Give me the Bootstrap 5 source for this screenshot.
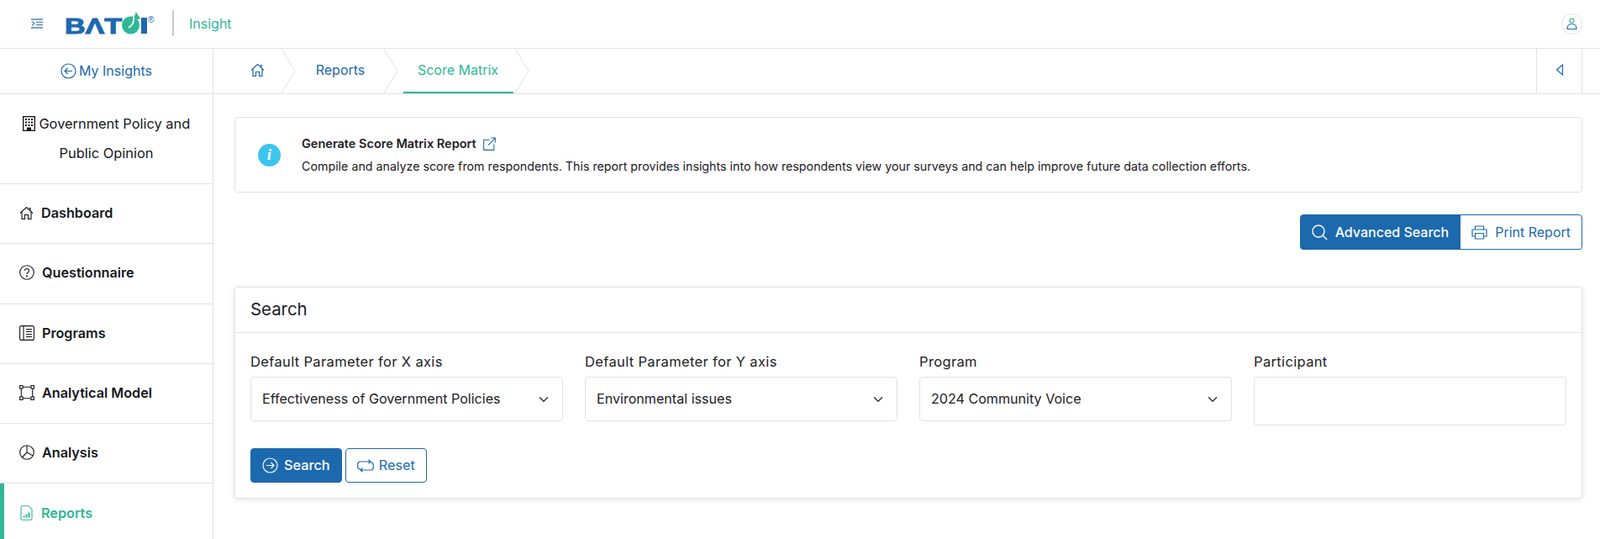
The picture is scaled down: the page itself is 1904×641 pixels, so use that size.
<!DOCTYPE html>
<html lang="en"><head><meta charset="utf-8"><title>Score Matrix</title>
<link href="https://cdn.jsdelivr.net/npm/bootstrap@5.3.0/dist/css/bootstrap.min.css" rel="stylesheet">
<style>
:root{--blue:#1c69ae;--green:#2fb796;--line:#dfe2e6;--ink:#1d2026}
html,body{height:641px;overflow:hidden}
body{font-family:Inter,"Noto Sans",sans-serif;font-size:15px;color:var(--ink);background:#fff}
svg{flex:none}
.top-bar{height:58px;border-bottom:1px solid var(--line);padding:0 21px 2px 37px}
.logo-svg{margin-left:26px}
.app-sep{width:2px;height:31px;background:#c9cbcd;margin:0 18px}
.app-name{color:var(--green);font-size:16px}
.user-ring{width:25px;height:25px;border:1px solid #dfe3e8;border-radius:50%;margin-top:2px}
.second-bar{height:54px;border-bottom:1px solid var(--line)}
.back-cell{width:254px;border-right:1px solid var(--line);color:var(--blue);font-size:16px;gap:3px;padding-bottom:1px}
.crumb{height:53px;color:var(--blue);font-size:16px;text-decoration:none;position:relative;padding-bottom:3px}
.crumb-arrow{position:absolute;right:-16px;top:0;z-index:1}
.crumb-home{width:82px;padding-left:22px}
.crumb-rep{width:122px;padding-left:16px}
.crumb-score{width:156px;padding-left:18px;color:var(--green)}
.crumb-score::after{content:"";position:absolute;left:22px;right:3px;bottom:0;height:2px;background:var(--green)}
.collapse-cell{width:55px;height:53px;border-left:1px solid var(--line);border-right:1px solid var(--line);margin-right:21px;padding-bottom:3px}
.side-col{width:254px;height:529px;border-right:1px solid var(--line)}
.side-title{height:107px;border-bottom:1px solid var(--line);text-align:center;padding:18px 18px 0;line-height:35px;font-size:16.400px;font-weight:400;color:#15171c}
.side-item{height:71.300px;border-bottom:1px solid var(--line);padding:0 0 2px 23px;gap:9px;font-size:16.200px;font-weight:600;color:#15171c}
.side-item.is-on{color:var(--green);border-bottom:0;border-left:5px solid var(--green);padding-left:19px;gap:10px}
.main-col{padding:27px 21px 0 25px;min-width:0}
.info-box{height:90px;border:1px solid var(--line);border-radius:4px;padding:0 0 0 27px;gap:25px}
.info-dot{width:27px;height:27px;border-radius:50%;background:#3cc5ee;color:#fff;font-family:"Liberation Serif",serif;font-style:italic;font-weight:700;font-size:19px}
.info-head{font-weight:600;font-size:14.500px;line-height:20px;gap:8px}
.info-text{font-size:14.250px;line-height:20px;margin-top:7px}
.act-row{margin-top:26px;height:42px}
.act-a,.act-b{height:42px;font-size:16px;padding:0 13px;gap:9px;--bs-btn-border-radius:4px}
.act-a{background:var(--blue);border-color:var(--blue);color:#fff;font-weight:500}
.act-b{background:#fff;border-color:var(--blue);color:var(--blue)}
.search-box{margin-top:44px;height:252px;border:1px solid var(--line);border-radius:3px;box-shadow:0 1px 6px rgba(0,0,0,.12)}
.search-head{height:54px;border-bottom:1px solid var(--line);padding:0 18px;font-size:20.400px;background:#fff}
.search-body{padding:23px 18px 0}
.fld-grid{--bs-gutter-x:26px;margin-left:-13px;margin-right:-13px}
.fld-label{font-size:16.500px;letter-spacing:.35px;line-height:22px;margin-bottom:7px;color:var(--ink)}
.fld-select{height:53px;border:1px solid var(--line);border-radius:4px;font-size:16.100px;color:var(--ink);padding:0 41px 0 13px;background-position:right 14px center;background-size:16px 12px}
.fld-input{height:58px;border:1px solid var(--line);border-radius:3px}
.btn-row{gap:4px;margin-top:27px}
.go-btn,.clear-btn{height:41px;font-size:16.300px;padding:0 13px;gap:7px;--bs-btn-border-radius:4px}
.go-btn{background:var(--blue);border-color:var(--blue);color:#fff;font-weight:500}
.clear-btn{background:#fff;border-color:var(--blue);color:var(--blue);gap:6px}
</style></head>
<body>
<header class="top-bar d-flex align-items-center">
  <svg width="14" height="12" viewBox="0 0 14 12" fill="none" stroke="#4f7fb8" stroke-width="1.300"><path d="M0 1h14M6 4.300h8M6 7.600h8M0 11h14M1 3.500l3 2.500-3 2.500"/></svg>
  <svg class="logo-svg" width="110" height="36" viewBox="0 -5 110 36">
    <text x="0" y="25" font-family="Liberation Sans" font-weight="700" font-size="26" fill="#1c69ae" stroke="#1c69ae" stroke-width="1" textLength="68" lengthAdjust="spacingAndGlyphs">BΛT</text>
    <circle cx="78.500" cy="15" r="10.500" fill="#2fb796"/><path d="M77 6 84 3l.5-4 5.500 8-5 2z" fill="#2fb796"/><path d="M82 4c1 6-1 11-6 14" stroke="#fff" stroke-width="1.800" fill="none"/>
    <rect x="91" y="6" width="7" height="19" fill="#1c69ae"/>
    <text x="99" y="12" font-family="Liberation Sans" font-size="10" fill="#1c69ae">®</text>
  </svg>
  <span class="app-sep"></span><span class="app-name">Insight</span>
  <span class="user-ring ms-auto d-flex align-items-center justify-content-center">
    <svg width="15" height="15" viewBox="0 0 15 15" fill="none" stroke-width="1.100"><circle cx="7.500" cy="3.500" r="2.500" stroke="#2fb796"/><path d="M2 13.500c0-4 2.500-6 5.500-6s5.500 2 5.500 6z" stroke="#1c69ae"/></svg>
  </span>
</header>
<div class="second-bar d-flex">
  <div class="back-cell d-flex align-items-center justify-content-center">
    <svg width="19" height="19" viewBox="0 0 19 19" fill="none" stroke="#1c69ae" stroke-width="1.200"><circle cx="9.500" cy="9.500" r="8.500"/><path d="M14 9.500H5M8.500 6l-3.500 3.500 3.500 3.500"/></svg>
    <span>My Insights</span>
  </div>
  <nav class="d-flex flex-grow-1">
    <a class="crumb crumb-home d-flex align-items-center justify-content-center" href="#">
      <svg width="17" height="17" viewBox="0 0 17 17" fill="none" stroke="#1c69ae" stroke-width="1.200"><path d="M1 8.500 8.500 1.500 16 8.500M3 7v8.500h3.500v-5h4v5H14V7M11.500 2.500H13v3"/></svg>
      <svg class="crumb-arrow" width="17" height="53" viewBox="0 0 17 53" fill="none" stroke="#dfe2e6"><path d="M0 0l16 26.500L0 53"/></svg>
    </a>
    <a class="crumb crumb-rep d-flex align-items-center justify-content-center" href="#">Reports
      <svg class="crumb-arrow" width="17" height="53" viewBox="0 0 17 53" fill="none" stroke="#dfe2e6"><path d="M0 0l16 26.500L0 53"/></svg></a>
    <a class="crumb crumb-score d-flex align-items-center justify-content-center" href="#">Score Matrix
      <svg class="crumb-arrow" width="17" height="53" viewBox="0 0 17 53" fill="none" stroke="#dfe2e6"><path d="M0 0l16 26.500L0 53"/></svg></a>
    <div class="collapse-cell ms-auto d-flex align-items-center justify-content-center">
      <svg width="10" height="14" viewBox="0 0 10 14" fill="none" stroke="#1c69ae" stroke-width="1.200"><path d="M8.500 1 1.500 7l7 6z"/></svg>
    </div>
  </nav>
</div>
<div class="d-flex">
  <aside class="side-col flex-shrink-0">
    <div class="side-title">
      <svg width="15" height="18" viewBox="0 0 15 18" style="vertical-align:-3px"><rect x=".6" y=".6" width="13.800" height="16.800" fill="none" stroke="#15171c" stroke-width="1.500"/><path d="M3 3h2v2H3zM6.500 3h2v2h-2zM10 3h2v2h-2zM3 6.500h2v2H3zM6.500 6.500h2v2h-2zM10 6.500h2v2h-2zM3 10h2v2H3zM6.500 10h2v2h-2zM10 10h2v2h-2zM5 13.500h5V17H5z" fill="#15171c"/></svg>
      Government Policy and Public Opinion
    </div>
    <div class="side-item d-flex align-items-center"><svg width="17" height="17" viewBox="0 0 17 17" fill="none" stroke="#15171c" stroke-width="1.100"><path d="M1 8.500 8.500 1.500 16 8.500M3 7v8.500h3.500v-5h4v5H14V7M11.500 2.500H13v3"/></svg>Dashboard</div>
    <div class="side-item d-flex align-items-center"><svg width="18" height="18" viewBox="0 0 18 18" fill="none" stroke="#15171c" stroke-width="1.100"><circle cx="9" cy="9" r="8.300"/><path d="M6.500 7c0-3.300 5-3.300 5 0 0 2-2.500 2-2.500 4"/><circle cx="9" cy="13.300" r=".5" fill="#15171c"/></svg>Questionnaire</div>
    <div class="side-item d-flex align-items-center"><svg width="18" height="18" viewBox="0 0 18 18" fill="none" stroke="#15171c" stroke-width="1.100"><rect x=".6" y=".6" width="16.800" height="16.800" rx="2"/><path d="M5 1v16M8 4.500h7M8 7.500h7M8 10.500h7M8 13.500h7"/></svg>Programs</div>
    <div class="side-item d-flex align-items-center"><svg width="18" height="18" viewBox="0 0 18 18" fill="none" stroke="#15171c" stroke-width="1.100"><rect x=".6" y=".6" width="3.500" height="3.500"/><rect x="13.900" y=".6" width="3.500" height="3.500"/><rect x=".6" y="13.900" width="3.500" height="3.500"/><rect x="13.900" y="13.900" width="3.500" height="3.500"/><path d="M4 2.300h10M4 15.700h10M2.300 4v10M15.700 4v10"/></svg>Analytical Model</div>
    <div class="side-item d-flex align-items-center"><svg width="18" height="18" viewBox="0 0 18 18" fill="none" stroke="#15171c" stroke-width="1.100"><circle cx="9" cy="9" r="8.300"/><path d="M9 .7V9l7.200 4M9 9l-5.700 6"/></svg>Analysis</div>
    <div class="side-item is-on d-flex align-items-center"><svg width="15" height="18" viewBox="0 0 15 18" fill="none" stroke="#2fb796" stroke-width="1.100"><path d="M1 2.500A1.800 1.800 0 0 1 2.800.7H10l4 4v10.800a1.800 1.800 0 0 1-1.800 1.800H2.800A1.800 1.800 0 0 1 1 15.500z"/><path d="M4.500 14.500v-2M7.500 14.500v-4M10.500 14.500v-6" stroke-width="2"/></svg>Reports</div>
  </aside>
  <main class="main-col flex-grow-1">
    <section class="info-box d-flex align-items-center">
      <span class="info-dot d-flex align-items-center justify-content-center flex-shrink-0">i</span>
      <div>
        <div class="info-head d-flex align-items-center">Generate Score Matrix Report
          <svg width="15" height="16" viewBox="0 0 14 15" fill="none" stroke="#1c69ae" stroke-width="1"><path d="M7 3H.6v11.400H12V8M5.500 9 13 1.500M8.500 1H13.400v5"/></svg></div>
        <div class="info-text">Compile and analyze score from respondents. This report provides insights into how respondents view your surveys and can help improve future data collection efforts.</div>
      </div>
    </section>
    <div class="act-row d-flex justify-content-end">
      <div class="btn-group">
        <button type="button" class="btn act-a d-flex align-items-center"><svg width="19" height="19" viewBox="0 0 19 19" fill="none" stroke="#fff" stroke-width="1.400"><circle cx="8" cy="8" r="7"/><path d="m13 13 5 5"/></svg>Advanced Search</button>
        <button type="button" class="btn act-b d-flex align-items-center"><svg width="19" height="17" viewBox="0 0 19 17" fill="none" stroke="#1c69ae" stroke-width="1.200"><path d="M4.500 5V1h10v4M4.500 13H1V5h17v8h-3.500M4.500 9.500h10V16h-10z"/></svg>Print Report</button>
      </div>
    </div>
    <section class="search-box">
      <div class="search-head d-flex align-items-center">Search</div>
      <div class="search-body">
        <div class="row fld-grid">
          <div class="col-3"><label class="fld-label d-block">Default Parameter for X axis</label><select class="form-select fld-select"><option>Effectiveness of Government Policies</option></select></div>
          <div class="col-3"><label class="fld-label d-block">Default Parameter for Y axis</label><select class="form-select fld-select"><option>Environmental issues</option></select></div>
          <div class="col-3"><label class="fld-label d-block">Program</label><select class="form-select fld-select"><option>2024 Community Voice</option></select></div>
          <div class="col-3"><label class="fld-label d-block">Participant</label><input class="form-control fld-input" type="text" aria-label="Participant"></div>
        </div>
        <div class="btn-row d-flex">
          <button type="button" class="btn go-btn d-flex align-items-center"><svg width="19" height="19" viewBox="0 0 19 19" fill="none" stroke="#fff" stroke-width="1.200"><circle cx="9.500" cy="9.500" r="8.500"/><path d="M5 9.500h9M10.500 6l3.500 3.500-3.500 3.500"/></svg>Search</button>
          <button type="button" class="btn clear-btn d-flex align-items-center"><svg width="20" height="16" viewBox="0 0 20 16" fill="none" stroke="#1c69ae" stroke-width="1.200"><path d="M4 12H3.500A3 3 0 0 1 .7 9V6a3 3 0 0 1 2.800-3H16M13.500.8 16 3l-2.500 2.200M16 4h.5a3 3 0 0 1 2.800 3v3a3 3 0 0 1-2.800 3H4M6.500 10.800 4 13l2.500 2.200"/></svg>Reset</button>
        </div>
      </div>
    </section>
  </main>
</div>
<script src="https://cdn.jsdelivr.net/npm/bootstrap@5.3.0/dist/js/bootstrap.bundle.min.js"></script>
</body></html>
